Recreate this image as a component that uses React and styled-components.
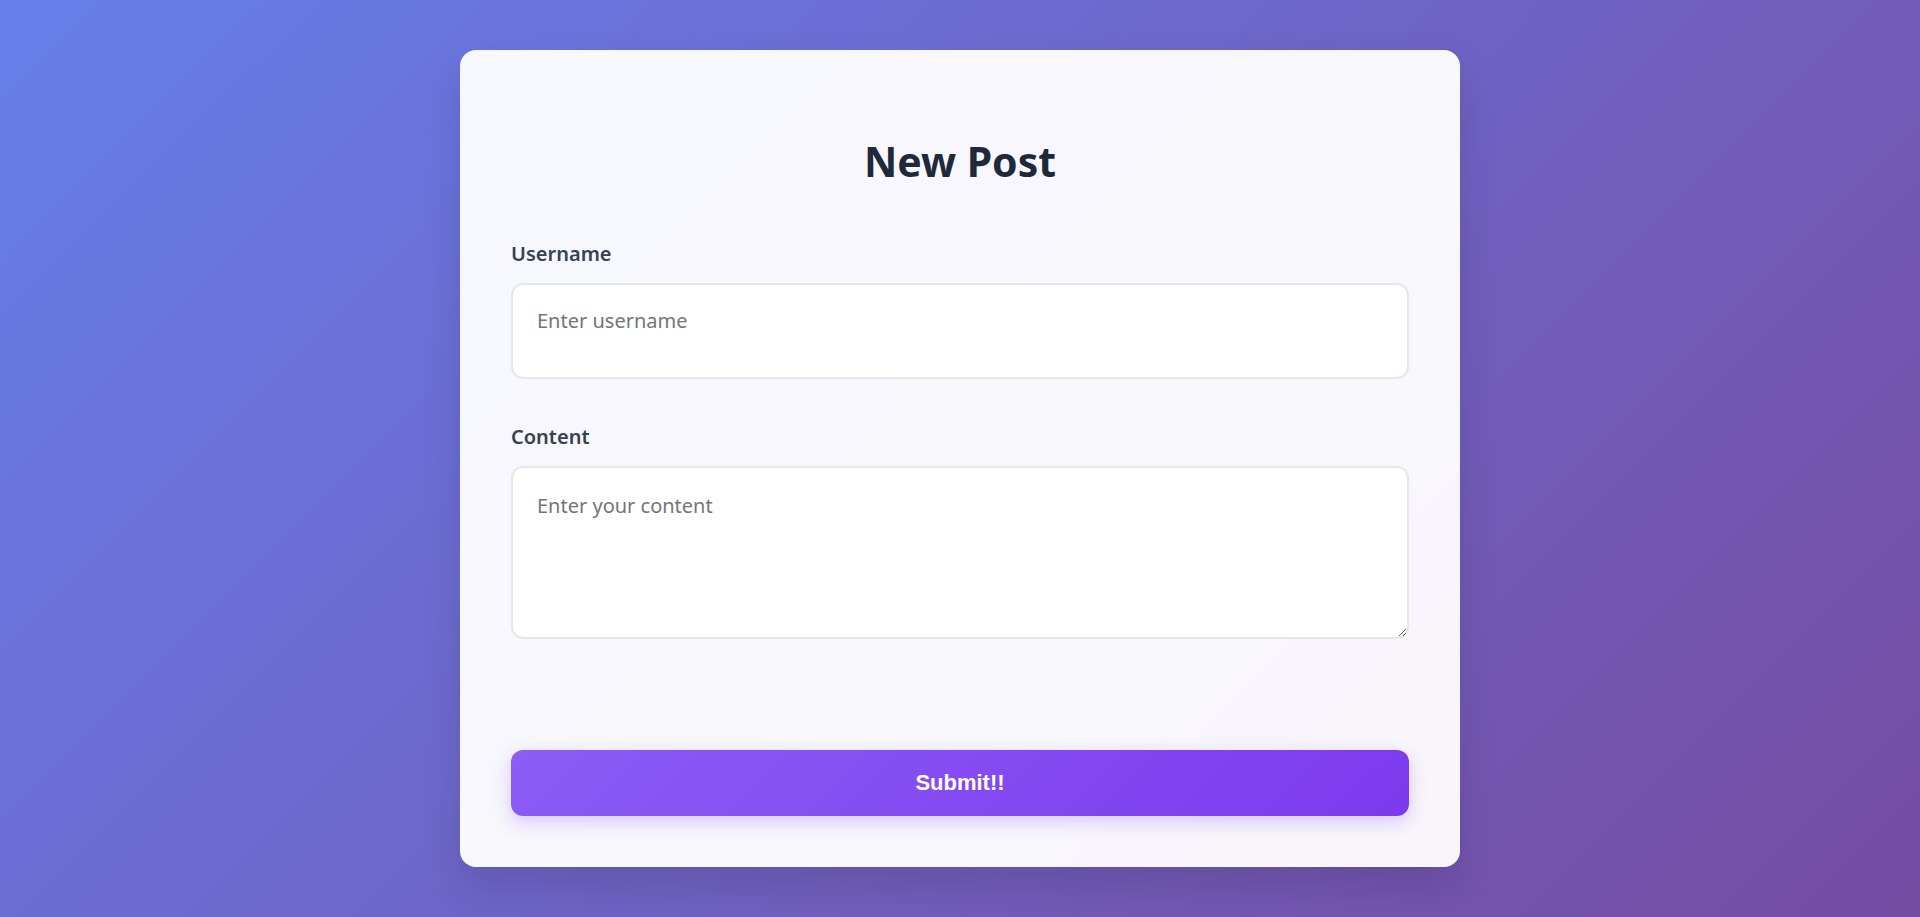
import React, { useState } from "react";
import styled, { createGlobalStyle } from "styled-components";

const GlobalStyle = createGlobalStyle`
  * {
    box-sizing: border-box;
  }

  body {
    margin: 0;
    font-family: "Noto Sans", "Open Sans", sans-serif;
  }
`;

const Page = styled.div`
  min-height: 100vh;
  display: flex;
  align-items: flex-start;
  justify-content: center;
  padding: 50px 0;
  background: linear-gradient(135deg, #667eea 0%, #764ba2 100%);
`;

const Card = styled.div`
  width: 1000px;
  padding: 48px 51px 51px;
  background: rgba(255, 255, 255, 0.95);
  border-radius: 16px;
  box-shadow: 0 20px 40px rgba(0, 0, 0, 0.12);
`;

const Title = styled.h1`
  margin: 39px 0 53px;
  text-align: center;
  font-size: 41px;
  line-height: 1.2;
  font-weight: 700;
  color: #1e293b;
`;

const Form = styled.form`
  display: flex;
  flex-direction: column;
`;

const Field = styled.div`
  display: flex;
  flex-direction: column;
  margin-bottom: ${({ $last }) => ($last ? "111px" : "43px")};
`;

const Label = styled.label`
  display: block;
  margin-bottom: 14px;
  font-size: 20px;
  line-height: 30px;
  font-weight: 600;
  color: #374151;
`;

const fieldBase = `
  width: 100%;
  border: 2px solid #e5e7eb;
  border-radius: 12px;
  background: #ffffff;
  font-family: "Noto Sans", "Open Sans", sans-serif;
  font-size: 20px;
  line-height: 27px;
  color: #1f2937;
  outline: none;

  &::placeholder {
    color: #757575;
  }

  &:focus {
    border-color: #8b5cf6;
  }
`;

const TextInput = styled.input`
  ${fieldBase}
  height: 96px;
  padding: 22px 24px 43px;
`;

const TextArea = styled.textarea`
  ${fieldBase}
  height: 173px;
  padding: 24px 24px;
  resize: vertical;
`;

const SubmitButton = styled.button`
  height: 66px;
  border: none;
  border-radius: 12px;
  background: linear-gradient(135deg, #8b5cf6 0%, #7c3aed 100%);
  box-shadow: 0 6px 18px rgba(139, 92, 246, 0.3);
  color: #ffffff;
  font-family: "Liberation Sans", Arial, sans-serif;
  font-size: 22px;
  font-weight: 700;
  cursor: pointer;
`;

const App = () => {
  const [username, setUsername] = useState("");
  const [content, setContent] = useState("");

  return (
    <>
      <GlobalStyle />
      <Page>
        <Card>
          <Title>New Post</Title>
          <Form onSubmit={(e) => e.preventDefault()}>
            <Field>
              <Label htmlFor="username">Username</Label>
              <TextInput
                id="username"
                placeholder="Enter username"
                value={username}
                onChange={(e) => setUsername(e.target.value)}
              />
            </Field>
            <Field $last>
              <Label htmlFor="content">Content</Label>
              <TextArea
                id="content"
                placeholder="Enter your content"
                value={content}
                onChange={(e) => setContent(e.target.value)}
              />
            </Field>
            <SubmitButton type="submit">Submit!!</SubmitButton>
          </Form>
        </Card>
      </Page>
    </>
  );
};

export default App;
